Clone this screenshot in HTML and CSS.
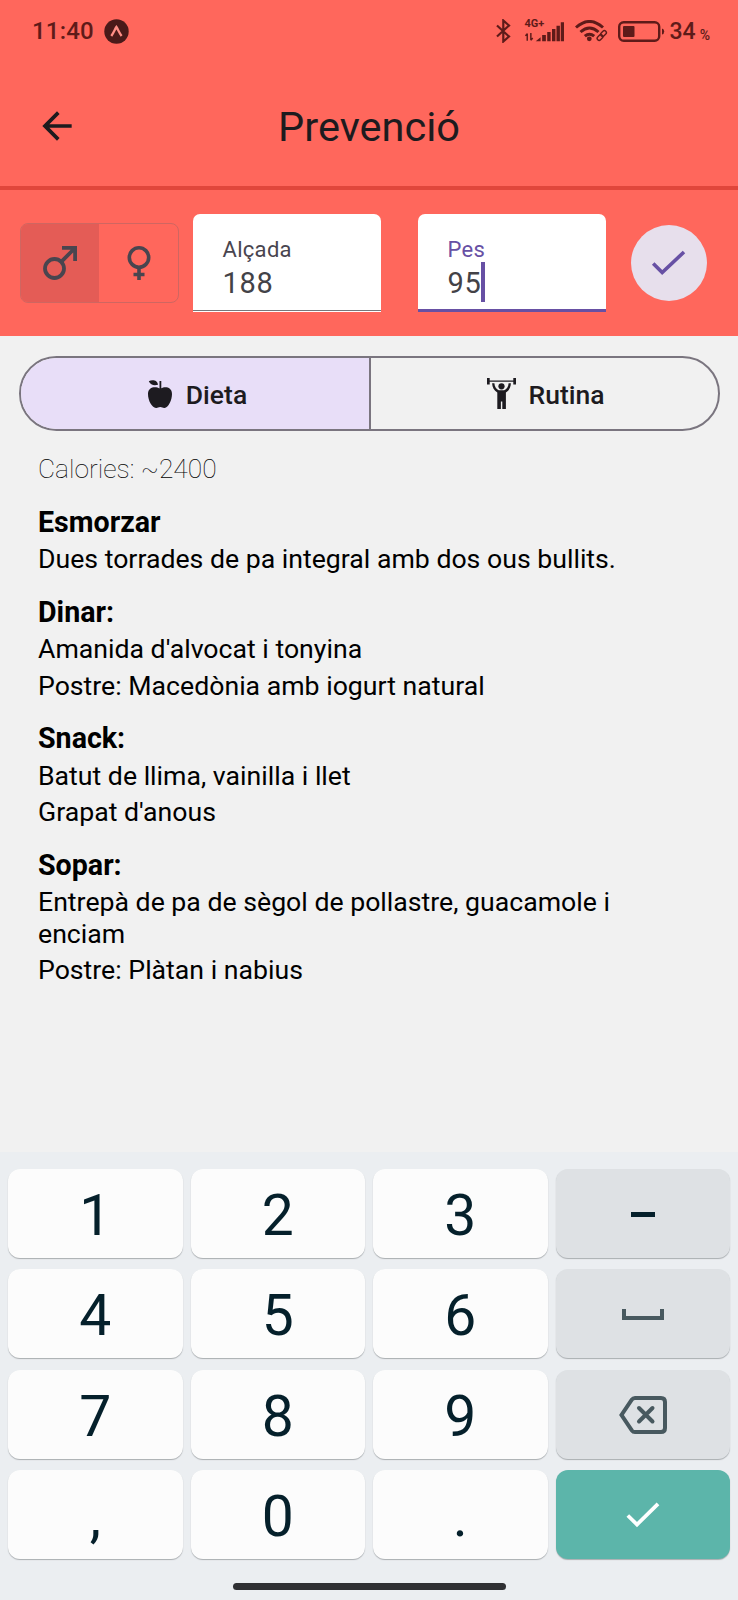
FILE: index.html
```html
<!DOCTYPE html>
<html lang="ca">
<head>
  <meta charset="UTF-8" />
  <title>Prevenció</title>
  <meta name="viewport" content="width=device-width, initial-scale=1.0" />
  <link rel="stylesheet" href="styles.css">
</head>
<body>

  <div class="status">
    <span class="time">11:40</span>
    <svg class="expo" viewBox="0 0 25 25"><circle cx="12.5" cy="12.5" r="12.2" fill="#4a1a19"/><path d="M7.3 17C9.500 14 11 10 12.400 8c1.400 2 3 6 5.200 9" fill="none" stroke="#ff8f86" stroke-width="2.3"/></svg>
    <div class="status-icons">
      <svg class="bt" viewBox="0 0 15 24"><path d="M1 6.500 13 17.500 7.300 22.500V1.500L13 6.500 1 17.500" fill="none" stroke="#5e1b19" stroke-width="2.2"/></svg>
      <div class="signal">
        <span>4G+</span>
        <svg viewBox="0 0 40 21"><path d="M2.300 20v-7.500M.4 15l1.900-2.300M6 12v7.500M7.900 17.200 6 19.500" fill="none" stroke="#5e1b19" stroke-width="1.5"/><path d="M11 20.500 16 16.300V20.500zM17.600 14h3.800v6.500h-3.800zM22.800 11h3.500v9.500h-3.500zM27.700 8h3.500v12.500h-3.500zM32.300 4.500h3.500v16h-3.500zM36.700 1H40v19.500h-3.300z" fill="#5e1b19"/></svg>
      </div>
      <svg class="wifi" viewBox="0 0 33 22"><g fill="none" stroke="#5e1b19" stroke-width="3"><path d="M1 7.500Q14.500-4.500 28 7.500"/><path d="M5.500 12Q14.500 4 23.500 12"/><path d="M9.800 16.200Q14.500 12.200 19.200 16.200"/></g><circle cx="14.3" cy="18.8" r="2.4" fill="#5e1b19"/><g fill="none" stroke="#5e1b19" stroke-width="1.4"><rect x="-3.2" y="-2" width="6.4" height="4" rx="2" transform="translate(28.5 13.5) rotate(-45)"/><rect x="-3.2" y="-2" width="6.4" height="4" rx="2" transform="translate(25 17.5) rotate(-45)"/></g></svg>
      <svg class="battery" viewBox="0 0 47 21"><rect x="1.2" y="1.2" width="40" height="18.6" rx="4.5" fill="none" stroke="#5e1b19" stroke-width="2.4"/><rect x="5" y="5" width="11.5" height="11" rx="1" fill="#5e1b19"/><path d="M44 7.500q2.200.5 2.200 3t-2.200 3z" fill="#5e1b19"/></svg>
      <span class="level">34</span><span class="percent">%</span>
    </div>
  </div>

  <div class="header">
    <svg class="back" viewBox="0 0 24 24"><path d="M20 11H7.830l5.590-5.590L12 4l-8 8 8 8 1.410-1.410L7.830 13H20v-2z" fill="#1d1b1e"/></svg>
    <h1>Prevenció</h1>
  </div>

  <div class="form">
    <div class="gender">
      <button class="active"><svg width="36" height="36" viewBox="0 0 36 36" fill="none" stroke="#49454f" stroke-width="3.8"><circle cx="12.5" cy="23.5" r="9.5"/><path d="M19.200 16.800 33 3M20 2.900h13.100V16"/></svg></button>
      <button><svg width="24" height="36" viewBox="0 0 24 36" fill="none" stroke="#49454f" stroke-width="3.6"><circle cx="12" cy="12.5" r="9.7"/><path d="M12 22.200V35M6.500 29.500h11"/></svg></button>
    </div>
    <div class="field">
      <label>Alçada</label>
      <div class="value">188</div>
    </div>
    <div class="field focused">
      <label>Pes</label>
      <div class="value">95<i class="caret"></i></div>
    </div>
    <button class="submit"><svg width="36" height="28" viewBox="0 0 36 28"><path d="M2.200 14.500 11.200 23.500 33 3" fill="none" stroke="#6750a4" stroke-width="3.6"/></svg></button>
  </div>

  <div class="tabs">
    <button class="active">
      <svg width="28" height="28" viewBox="-2 0 28 28" fill="#1d1b20"><path d="M11.500 8.500V1h1.800v7.300C16 6.300 24 6.200 24 14c0 6-3.500 13.500-7.500 14-1.600.1-2.300-1-4.300-1S9.600 28.100 8 28C3.800 27.500 0 20.500 0 14 0 6.500 8 6.300 11.500 8.500z"/><path d="M.8 1.200C4-.6 9.500-.2 10 4.800 6 6 2.500 5 .8 1.200z"/></svg>
      <span>Dieta</span>
    </button>
    <button>
      <svg width="29" height="33" viewBox="0 0 29 33" fill="#1d1b20"><path d="M0 1h2.700v6.500H0zM26.300 1H29v6.500h-2.700z"/><path d="M2 3.400h25v1.300H2z"/><circle cx="14.5" cy="9.3" r="3.1"/><path d="M5.100 6.300h2.300c.2 3.700 2 6.300 4.400 6.900h5.400c2.400-.6 4.200-3.200 4.400-6.900h2.300c-.2 4.300-2 7.500-5 9.100V32h-3.600v-7.500h-1.400V32h-3.600V15.400C7.100 13.800 5.300 10.600 5.100 6.300z"/></svg>
      <span>Rutina</span>
    </button>
  </div>

  <div class="diet">
    <p class="calories">Calories: ~2400</p>
    <h2>Esmorzar</h2>
    <p>Dues torrades de pa integral amb dos ous bullits.</p>
    <h2>Dinar:</h2>
    <p>Amanida d'alvocat i tonyina</p>
    <p>Postre: Macedònia amb iogurt natural</p>
    <h2>Snack:</h2>
    <p>Batut de llima, vainilla i llet</p>
    <p>Grapat d'anous</p>
    <h2>Sopar:</h2>
    <p>Entrepà de pa de sègol de pollastre, guacamole i enciam</p>
    <p>Postre: Plàtan i nabius</p>
  </div>

  <div class="keyboard">
    <div class="keys">
      <button>1</button>
      <button>2</button>
      <button>3</button>
      <button class="fn"><svg width="24" height="5" viewBox="0 0 24 5"><path d="M0 0h24v5H0z" fill="#05202b"/></svg></button>
      <button>4</button>
      <button>5</button>
      <button>6</button>
      <button class="fn"><svg width="42" height="11" viewBox="0 0 42 11"><path d="M2 0v9h38V0" fill="none" stroke="#48595f" stroke-width="4"/></svg></button>
      <button>7</button>
      <button>8</button>
      <button>9</button>
      <button class="fn"><svg width="48" height="38" viewBox="0 0 48 38" fill="none" stroke="#48595f" stroke-width="4"><path d="M16 2h26q4 0 4 4v26q0 4-4 4H16q-2 0-3.200-1.700L2.500 19 12.800 3.700Q14 2 16 2z"/><path d="M20 12 33.500 25.500M33.500 12 20 25.500" stroke-linecap="round"/></svg></button>
      <button>,</button>
      <button>0</button>
      <button>.</button>
      <button class="ok"><svg width="34" height="26" viewBox="0 0 34 26"><path d="M1.800 13.500 11 22.500 32 1.800" fill="none" stroke="#fff" stroke-width="3.8"/></svg></button>
    </div>
    <div class="pill"></div>
  </div>

</body>
</html>
```

FILE: styles.css
```css
* {
  box-sizing: border-box;
}
body {
  margin: 0;
  height: 1600px;
  display: flex;
  flex-direction: column;
  font-family: Roboto, sans-serif;
  background: #f1f1f1;
  color: #000;
  overflow: hidden;
}
h1, h2, p {
  margin: 0;
}
button {
  border: 0;
  padding: 0;
  background: none;
  font-family: inherit;
  display: flex;
  align-items: center;
  justify-content: center;
}
svg {
  display: block;
  flex: none;
}

/* status bar */
.status {
  height: 62px;
  padding: 0 28px 0 32px;
  display: flex;
  align-items: center;
  background: #ff675c;
  color: #5e1b19;
}
.time {
  font-size: 24px;
  font-weight: 500;
  letter-spacing: 0.2px;
  width: 72px;
}
.expo {
  width: 25px;
  height: 25px;
}
.status-icons {
  margin-left: auto;
  display: flex;
  align-items: center;
}
.bt {
  width: 15px;
  height: 24px;
  margin-right: 14px;
}
.signal {
  width: 40px;
  height: 21px;
  margin-right: 10px;
  position: relative;
}
.signal span {
  position: absolute;
  left: 0;
  top: -3px;
  font-size: 11px;
  line-height: 12px;
  font-weight: 700;
}
.signal svg {
  width: 39px;
  height: 21px;
}
.wifi {
  width: 33px;
  height: 22px;
  margin-right: 10px;
}
.battery {
  width: 47px;
  height: 21px;
  margin-right: 5px;
}
.level {
  font-size: 23px;
  font-weight: 500;
}
.percent {
  font-size: 14px;
  font-weight: 500;
  padding: 7px 0 0 4px;
}

/* header */
.header {
  height: 128px;
  padding: 4px 35px 0;
  display: grid;
  grid-template-columns: 44px 1fr 44px;
  align-items: center;
  background: #ff675c;
  border-bottom: 4px solid #e0463b;
}
.back {
  width: 44px;
  height: 44px;
}
h1 {
  font-size: 41.5px;
  font-weight: 400;
  text-align: center;
  color: #1d1b1e;
}

/* form */
.form {
  height: 146px;
  padding: 24px 0 24px 20px;
  display: flex;
  align-items: center;
  background: #ff675c;
}
.gender {
  display: flex;
  width: 159px;
  height: 80px;
  margin-right: 13.5px;
  border: 1px solid #cf6661;
  border-radius: 8px;
  overflow: hidden;
}
.gender button {
  width: 79px;
}
.gender .active {
  width: 78px;
  background: #e45c56;
}
.field {
  width: 188px;
  height: 98px;
  padding: 23px 30px 0;
  margin-right: 37px;
  background: #fff;
  border-radius: 7px 7px 0 0;
  box-shadow: inset 0 -1px #fff, inset 0 -2px #77777a;
  color: #49454f;
}
.field label {
  display: block;
  font-size: 22px;
  line-height: 26px;
  letter-spacing: 0.3px;
}
.value {
  display: flex;
  align-items: center;
  height: 40px;
  font-size: 29px;
  letter-spacing: 0.7px;
  color: #434247;
}
.focused {
  margin-right: 25px;
  box-shadow: inset 0 -3px #6750a4;
}
.focused label {
  color: #6750a4;
}
.caret {
  width: 4px;
  height: 40px;
  margin: -2px 0 0 -1px;
  background: #6750a4;
}
.submit {
  width: 76px;
  height: 76px;
  border-radius: 50%;
  background: #e7dfec;
}

/* tabs */
.tabs {
  display: grid;
  grid-template-columns: 350px 1fr;
  width: 701px;
  height: 75px;
  margin: 20px 0 0 19px;
  border: 2px solid #7a757f;
  border-radius: 38px;
  overflow: hidden;
}
.tabs button {
  gap: 12px;
  padding-left: 3px;
  font-size: 26.5px;
  font-weight: 500;
  color: #1d1b20;
}
.tabs span {
  padding-top: 1px;
}
.tabs .active {
  background: #e8def8;
  border-right: 2px solid #7a757f;
}

/* diet */
.diet {
  flex: 1;
  padding: 23px 60px 0 38px;
}
.diet p {
  font-size: 26.66px;
  line-height: 31.4px;
  margin-bottom: 5px;
}
.diet h2 {
  font-size: 28.6px;
  line-height: 34px;
  margin: 19.4px 0 5.3px;
}
.diet .calories {
  font-size: 26.4px;
  font-weight: 100;
}

/* keyboard */
.keyboard {
  height: 448px;
  padding: 17px 8px 0;
  background: #ebeef1;
}
.keys {
  display: grid;
  grid-template-columns: repeat(4, 1fr);
  grid-auto-rows: 89px;
  gap: 11.3px 8px;
}
.keys button {
  padding-top: 4px;
  background: #fcfcfc;
  border-radius: 12px;
  box-shadow: 0 1px 1px #a9adb0;
  font-size: 57px;
  color: #05202b;
}
.keys .fn {
  padding-top: 2px;
  background: #dee1e4;
}
.keys .ok {
  padding-top: 2px;
  background: #5cb5aa;
}
.pill {
  width: 273px;
  height: 7px;
  margin: 24px auto 0;
  border-radius: 4px;
  background: #2f3033;
}
```
